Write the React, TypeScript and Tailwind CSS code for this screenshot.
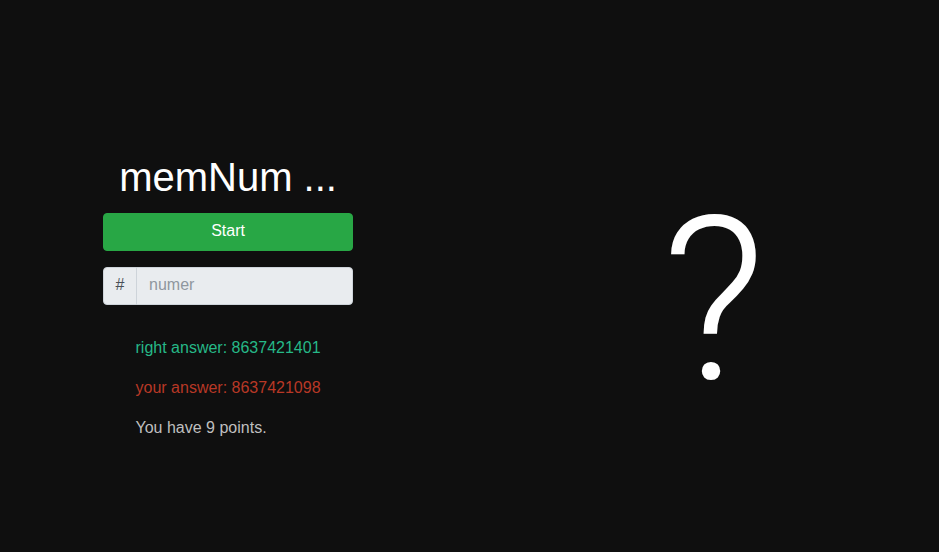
export default function App() {
  return (
    <div className="min-h-screen bg-[#0f0f0f] font-['Liberation_Sans',Arial,sans-serif] text-base text-white">
      <main className="grid grid-cols-[17fr_18fr] items-start pt-[153px]">
        <section className="mx-auto flex w-[250px] flex-col">
          <h1 className="mb-3 text-center text-[40px] leading-12">memNum ...</h1>
          <button type="button" className="mb-4 h-[38px] rounded border border-[#28a745] bg-[#28a745] px-3 pb-0.5 leading-6">
            Start
          </button>
          <div className="mb-[31px] flex h-[38px] w-full">
            <label htmlFor="number" className="flex w-[34px] items-center justify-center rounded-l border border-[#ced4da] bg-[#e9ecef] pb-0.5 text-[#495057]">
              #
            </label>
            <input
              id="number"
              type="text"
              disabled
              placeholder="numer"
              className="-ml-px min-w-0 flex-1 rounded-r border border-[#ced4da] bg-[#e9ecef] px-3 pb-0.5 placeholder:text-[#8f979e]"
            />
          </div>
          <div className="mx-auto flex flex-col gap-4">
            <p className="text-[#26b887]">right answer: 8637421401</p>
            <p className="text-[#b83826]">your answer: 8637421098</p>
            <p className="text-[#bfbfbf]">You have 9 points.</p>
          </div>
        </section>
        <div className="pt-7 pl-8 text-center font-[Roboto,sans-serif] text-[228px] leading-[240px] font-light">?</div>
      </main>
    </div>
  );
}
